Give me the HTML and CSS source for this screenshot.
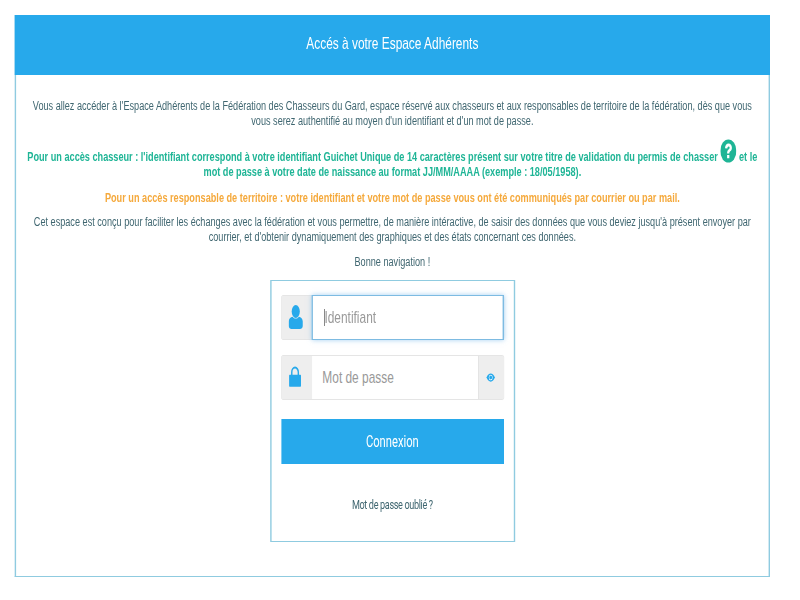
FILE: index.html
```html
<!DOCTYPE html>
<html lang="fr">
<head>
    <meta charset="UTF-8">
    <meta name="viewport" content="width=device-width, initial-scale=1.0">
    <title>Espace Adhérents</title>
    <link rel="stylesheet" href="styles.css">
</head>
<body>

    <div class="frame">
        <div class="page">
            <div class="panel">
                <div class="panel-heading">Accés à votre Espace Adhérents</div>
                <div class="panel-body">
                    <p>Vous allez accéder à l'Espace Adhérents de la Fédération des Chasseurs du Gard, espace réservé aux chasseurs et aux responsables de territoire de la fédération, dès que vous vous serez authentifié au moyen d'un identifiant et d'un mot de passe.</p>
                    <p class="hunter">Pour un accès chasseur : l'identifiant correspond à votre identifiant Guichet Unique de 14 caractères présent sur votre titre de validation du permis de chasser
                        <svg class="help" viewBox="0 0 24 24"><circle cx="12" cy="12" r="12" fill="#1fb596"/><path d="M7 9.200c.2-3 2.300-5 5.300-5 2.900 0 5 1.800 5 4.300 0 1.900-1 2.900-2.400 3.800-1.100.7-1.400 1.200-1.400 2.400h-3.400c0-2 .5-3.100 2.100-4.200 1.100-.8 1.700-1.200 1.700-2 0-.8-.7-1.300-1.600-1.300-1 0-1.700.7-1.800 2.100zM10.100 16.200h3.400v3.400h-3.400z" fill="#fff"/></svg>
                        et le<br>mot de passe à votre date de naissance au format JJ/MM/AAAA (exemple : 18/05/1958).</p>
                    <p class="manager">Pour un accès responsable de territoire : votre identifiant et votre mot de passe vous ont été communiqués par courrier ou par mail.</p>
                    <p>Cet espace est conçu pour faciliter les échanges avec la fédération et vous permettre, de manière intéractive, de saisir des données que vous deviez jusqu'à présent envoyer par courrier, et d'obtenir dynamiquement des graphiques et des états concernant ces données.</p>
                    <p>Bonne navigation !</p>

                    <form class="login">
                        <div class="field">
                            <span class="addon">
                                <svg class="user-icon" viewBox="0 0 20 24"><ellipse cx="10" cy="6.500" rx="5.800" ry="6.500" fill="#27a9eb"/><path d="M0 21v-4.500c0-2.800 2.500-4.300 5.500-4.800 1.200 1.200 2.800 1.900 4.500 1.900s3.300-.7 4.500-1.900c3 .5 5.500 2 5.500 4.800V21c0 2-2 3-4 3H4c-2 0-4-1-4-3z" fill="#27a9eb"/></svg>
                            </span>
                            <span class="input input-active"><span class="caret"></span>Identifiant</span>
                        </div>
                        <div class="field">
                            <span class="addon">
                                <svg class="lock-icon" viewBox="0 0 20 24"><path d="M4.500 11V7a5.500 5.500 0 0 1 11 0v4" fill="none" stroke="#27a9eb" stroke-width="2.400"/><rect y="10" width="20" height="14" rx="1" fill="#27a9eb"/></svg>
                            </span>
                            <span class="input">Mot de passe</span>
                            <span class="addon addon-eye">
                                <svg class="eye" viewBox="0 0 16 12"><path d="M0 6c2-3.500 4.800-5.500 8-5.500s6 2 8 5.500c-2 3.500-4.800 5.500-8 5.500S2 9.500 0 6z" fill="#27a9eb"/><circle cx="8" cy="6" r="3.600" fill="#fff"/><circle cx="8" cy="6" r="2.700" fill="#27a9eb"/></svg>
                            </span>
                        </div>
                        <button type="button" class="btn">Connexion</button>
                        <a class="forgot" href="#">Mot de passe oublié ?</a>
                    </form>
                </div>
            </div>
        </div>
    </div>

</body>
</html>
```

FILE: styles.css
```css
body {
    margin: 0;
    background-color: #fff;
}
.frame {
    width: 800px;
    height: 600px;
    overflow: hidden;
}
/* the whole page is squeezed sideways, widths below are before the scale */
.page {
    width: 1142px;
    padding: 15px 0 0 21px;
    box-sizing: border-box;
    transform: scaleX(.7);
    transform-origin: 0 0;
    font-family: "Liberation Sans", Arial, sans-serif;
    font-size: 13.05px;
    line-height: 15px;
    color: #3f6670;
}
.panel {
    width: 1079px;
    height: 562px;
    box-sizing: border-box;
    border: 2px solid #8fcbe0;
    border-top: 0;
    border-bottom-width: 1px;
}
.panel-heading {
    height: 60px;
    margin: 0 -2px;
    background-color: #27a9eb;
    color: #fff;
    font-size: 17px;
    line-height: 58px;
    text-align: center;
}
.panel-body {
    padding: 23px 20px 0;
    text-align: center;
}
p {
    margin: 0 0 10px;
}
.hunter {
    margin: 20px -8px 10px;
    color: #1fb596;
    font-size: 13.08px;
    font-weight: bold;
}
.manager {
    margin: 11px 0 9px;
    color: #f5a93c;
    font-size: 13.08px;
    font-weight: bold;
}
.help {
    width: 23px;
    height: 24px;
    margin: -9px 0 0;
    vertical-align: -2px;
}
.login {
    width: 350px;
    height: 262px;
    box-sizing: border-box;
    margin: 11px auto 0;
    padding: 14px 14px 0;
    border: 2px solid #8fcbe0;
    border-bottom-width: 1px;
    border-top-width: 1px;
}
.field {
    display: flex;
    height: 45px;
    margin-bottom: 15px;
    border: 1px solid #e0e0e0;
    border-radius: 2px;
    box-sizing: border-box;
}
.addon {
    display: flex;
    flex-shrink: 0;
    align-items: center;
    justify-content: center;
    width: 43px;
    background-color: #eee;
}
.addon-eye {
    width: 35px;
    border-left: 1px solid #e0e0e0;
}
.user-icon {
    width: 21px;
    height: 24px;
    margin: 0 3px 2px 0;
}
.lock-icon {
    width: 17px;
    height: 23px;
    margin: 0 6px 3px 0;
}
.eye {
    width: 14px;
    height: 9px;
}
.input {
    flex: 1;
    padding-left: 15px;
    font-size: 17px;
    line-height: 43px;
    color: #999;
    background-color: #fff;
    text-align: left;
}
.input-active {
    margin: -1px;
    padding-left: 16px;
    line-height: 43px;
    border: 1px solid #7dbbe2;
    border-width: 1px 2px;
    box-shadow: 0 0 6px rgba(102, 175, 233, .6);
}
.caret {
    display: inline-block;
    width: 1px;
    height: 17px;
    vertical-align: -3px;
    background-color: #555;
}
.btn {
    display: block;
    width: 100%;
    height: 45px;
    margin-top: 19px;
    border: 0;
    background-color: #27a9eb;
    color: #fff;
    font-family: Roboto, sans-serif;
    font-size: 16px;
}
.forgot {
    display: block;
    margin-top: 33px;
    color: #3f6670;
    font-family: Roboto, sans-serif;
    font-size: 13px;
    letter-spacing: -0.5px;
    text-align: center;
    text-decoration: none;
}
```
